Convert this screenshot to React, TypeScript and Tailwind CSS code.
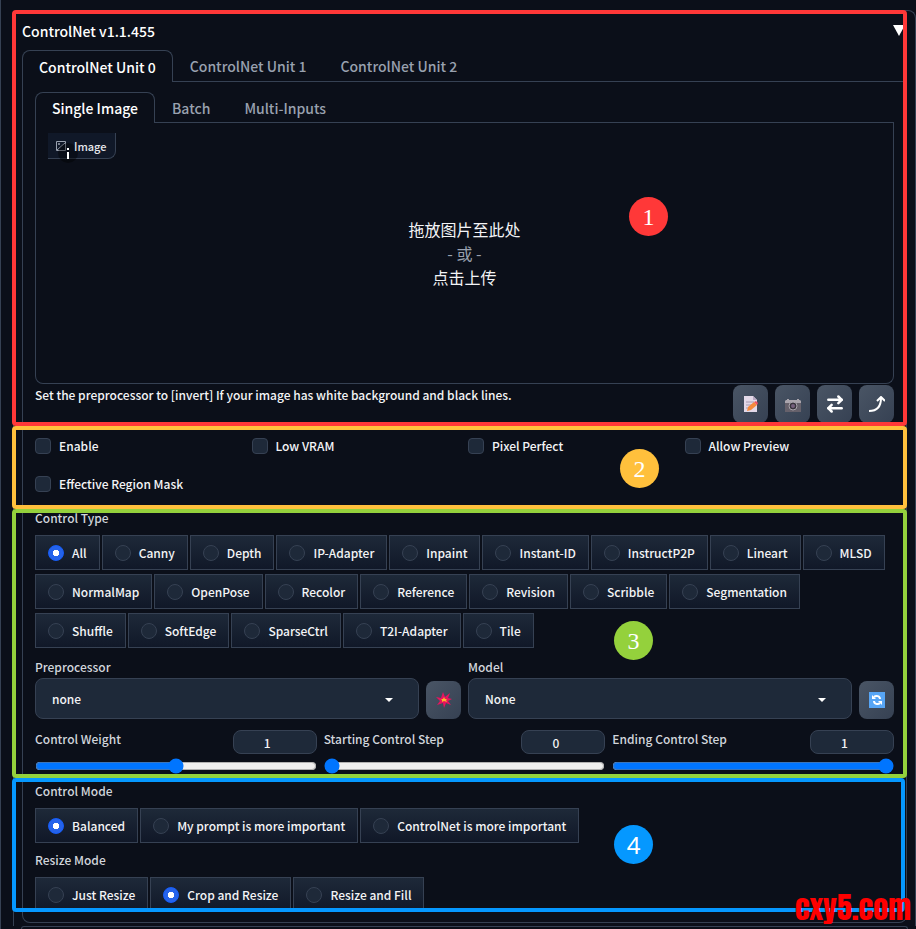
import React, { useState } from 'react';
import { ArrowRightLeft } from 'lucide-react';

const unitTabs = ['ControlNet Unit 0', 'ControlNet Unit 1', 'ControlNet Unit 2'];
const inputTabs = ['Single Image', 'Batch', 'Multi-Inputs'];
const options = ['Enable', 'Low VRAM', 'Pixel Perfect', 'Allow Preview', 'Effective Region Mask'];
const controlTypes = [
  'All', 'Canny', 'Depth', 'IP-Adapter', 'Inpaint', 'Instant-ID', 'InstructP2P', 'Lineart', 'MLSD',
  'NormalMap', 'OpenPose', 'Recolor', 'Reference', 'Revision', 'Scribble', 'Segmentation',
  'Shuffle', 'SoftEdge', 'SparseCtrl', 'T2I-Adapter', 'Tile',
];
const controlModes = ['Balanced', 'My prompt is more important', 'ControlNet is more important'];
const resizeModes = ['Just Resize', 'Crop and Resize', 'Resize and Fill'];

interface TabsProps {
  items: string[];
  active: string;
  onChange: (item: string) => void;
  className: string;
}

const Tabs: React.FC<TabsProps> = ({ items, active, onChange, className }) => (
  <div role="tablist" className="flex text-sm">
    {items.map((item) => (
      <button
        key={item}
        role="tab"
        aria-selected={item === active}
        onClick={() => onChange(item)}
        className={
          item === active
            ? `${className} rounded-t-lg border border-b-0 border-gray-700 px-4 text-white`
            : `${className} border-b border-gray-700 px-[17px] pt-px text-gray-400`
        }
      >
        {item}
      </button>
    ))}
    <div className="flex-1 border-b border-gray-700" />
  </div>
);

interface RadioGroupProps {
  label: string;
  name: string;
  items: string[];
  initial: string;
}

const RadioGroup: React.FC<RadioGroupProps> = ({ label, name, items, initial }) => {
  const [value, setValue] = useState(initial);

  return (
    <fieldset className="pr-1">
      <legend className="mb-2 leading-[18px] text-gray-300">{label}</legend>
      <div className="flex flex-wrap gap-x-[2px] gap-y-1">
        {items.map((item) => (
          <label
            key={item}
            className="flex h-[35px] items-center gap-2 border border-gray-700 bg-linear-to-b from-gray-800 to-gray-900 px-3"
          >
            <input
              type="radio"
              name={name}
              checked={value === item}
              onChange={() => setValue(item)}
              className="size-4 appearance-none rounded-full border border-gray-700 bg-gray-800 checked:border-blue-600 checked:bg-[radial-gradient(circle,white_3px,#2563eb_3px)]"
            />
            {item}
          </label>
        ))}
      </div>
    </fieldset>
  );
};

const ToolButton: React.FC<{ label: string; children: React.ReactNode }> = ({ label, children }) => (
  <button
    aria-label={label}
    className="flex h-[38px] w-[35px] items-center justify-center rounded-lg bg-linear-to-br from-gray-600 to-gray-700 text-white"
  >
    {children}
  </button>
);

interface DropdownProps {
  id: string;
  label: string;
  value: string;
  action: string;
  children: React.ReactNode;
}

const Dropdown: React.FC<DropdownProps> = ({ id, label, value, action, children }) => (
  <div className="flex items-end gap-[7px]">
    <div className="flex-1">
      <label htmlFor={id} className="mb-[2px] block leading-[18px] text-gray-300">{label}</label>
      <div className="relative">
        <select id={id} className="h-[41px] w-full appearance-none rounded-lg border border-gray-700 bg-gray-800 px-4 text-gray-100">
          <option>{value}</option>
        </select>
        <svg viewBox="0 0 8 4" className="pointer-events-none absolute top-5 right-[26px] h-1 w-2 fill-white">
          <path d="M0 0h8L4 4z" />
        </svg>
      </div>
    </div>
    <ToolButton label={action}>{children}</ToolButton>
  </div>
);

interface SliderProps {
  id: string;
  label: string;
  initial: number;
  max: number;
}

const Slider: React.FC<SliderProps> = ({ id, label, initial, max }) => {
  const [value, setValue] = useState(initial);

  return (
    <div>
      <div className="flex justify-between">
        <label htmlFor={id} className="leading-[18px] text-gray-300">{label}</label>
        <input
          type="number"
          aria-label={`${label} value`}
          value={value}
          max={max}
          onChange={(e) => setValue(Number(e.target.value))}
          className="h-6 w-[84px] rounded-lg border border-gray-700 bg-gray-800 px-2 text-center text-gray-100"
        />
      </div>
      <input
        id={id}
        type="range"
        min={0}
        max={max}
        step={0.01}
        value={value}
        onChange={(e) => setValue(Number(e.target.value))}
        className="mt-1 block h-4 w-full"
      />
    </div>
  );
};

const Badge: React.FC<{ className: string; children: React.ReactNode }> = ({ className, children }) => (
  <span className={`absolute flex size-[39px] items-center justify-center rounded-full text-2xl font-normal text-white ${className}`}>
    {children}
  </span>
);

export default function App() {
  const [unit, setUnit] = useState(unitTabs[0]);
  const [input, setInput] = useState(inputTabs[0]);

  return (
    <div className="flex min-h-screen flex-col overflow-hidden border-l border-gray-700 bg-[#0b0f19] pt-[10px] pl-3 font-['Noto_Sans_CJK_SC',sans-serif] text-xs/5 font-medium text-gray-100">
      <main className="relative rounded-t-lg border border-b-0 border-gray-700 px-2 pb-[3px]">
        <header className="flex h-[39px] items-center justify-between text-sm text-white">
          <h1>ControlNet v1.1.455</h1>
          <svg viewBox="0 0 12 11" className="mr-[2px] h-[11px] w-3 fill-white">
            <path d="M0 0h12L6 11z" />
          </svg>
        </header>

        <Tabs items={unitTabs} active={unit} onChange={setUnit} className="h-8" />

        <div className="rounded-b-lg border border-t-0 border-gray-700 px-3 pb-[10px]">
          {/* Image input */}
          <section className="relative h-[344px] pt-[10px]">
            <Tabs items={inputTabs} active={input} onChange={setInput} className="h-[31px]" />
            <div className="relative flex h-[261px] flex-col items-center justify-center rounded-b-lg border border-t-0 border-gray-700 text-base leading-6 font-normal">
              <div className="absolute top-[10px] left-3 flex h-[26px] items-center gap-2 rounded-br-lg border-r border-b border-gray-700 bg-gray-900 px-2 text-[11px] font-medium text-gray-200">
                <svg viewBox="0 0 10 10" className="size-[10px] fill-none stroke-gray-400">
                  <path d="M.5 .5h9v9h-9zM1 9l8-7" />
                  <circle cx="3" cy="3" r=".7" />
                </svg>
                <span className="absolute top-[10px] left-[10px] flex size-5 items-center justify-center rounded-full bg-black/40">
                  <svg viewBox="0 0 2 11" className="h-[11px] w-[2px] fill-white">
                    <path d="M0 0h2v2H0zM0 4h2v7H0z" />
                  </svg>
                </span>
                <span className="relative">Image</span>
              </div>
              <p>拖放图片至此处</p>
              <p className="text-gray-400">- 或 -</p>
              <p>点击上传</p>
            </div>
            <div className="flex justify-between pt-px">
              <p>Set the preprocessor to [invert] If your image has white background and black lines.</p>
              <div className="flex gap-[7px]">
                <ToolButton label="New canvas">
                  <svg viewBox="0 0 16 16" className="size-4">
                    <path d="M1 0h9l4 4v12H1z" fill="#e3d9e8" />
                    <path d="M10 0v4h4z" fill="#b9a9c4" />
                    <path d="M3 6h8M3 9h7M3 12h4" stroke="#a79ab0" />
                    <path d="M4 15l1-4 6-5 3 3-6 5z" fill="#f58a3c" />
                    <path d="M11 6l2-1 2 2-1 2z" fill="#f4505f" />
                  </svg>
                </ToolButton>
                <ToolButton label="Webcam">
                  <svg viewBox="0 0 16 16" className="size-4">
                    <path d="M0 5h16v11H0z" fill="#66616b" />
                    <path d="M0 5l1-1h1V3h2v1h8V3h2v1h1l1 1v2H0z" fill="#aaa5ad" />
                    <circle cx="8" cy="10" r="4" fill="#39343e" stroke="#aaa5ad" />
                    <circle cx="8" cy="10" r="2" fill="#76617e" />
                  </svg>
                </ToolButton>
                <ToolButton label="Mirror webcam">
                  <ArrowRightLeft className="size-5" strokeWidth={3} />
                </ToolButton>
                <ToolButton label="Send dimensions">
                  <svg viewBox="0 0 16 16" className="size-4 fill-none stroke-white stroke-2">
                    <path d="M0 15c7 0 12-3 12-13M8 5l4-4 4 4" />
                  </svg>
                </ToolButton>
              </div>
            </div>
            <div className="pointer-events-none absolute -top-[72px] right-[-13px] bottom-0 left-[-23px] rounded-sm border-4 border-[#ff3838]">
              <Badge className="top-[183px] left-[613px] bg-[#ff3838] font-['Liberation_Serif',serif]">1</Badge>
            </div>
          </section>

          {/* Unit options */}
          <section className="relative h-[83px] pt-[10px]">
            <div className="grid grid-cols-4 gap-x-[7px] gap-y-[18px]">
              {options.map((option) => (
                <label key={option} className="flex items-center gap-2">
                  <input
                    type="checkbox"
                    className="size-4 appearance-none rounded border border-gray-700 bg-gray-800 checked:border-blue-600 checked:bg-blue-600"
                  />
                  {option}
                </label>
              ))}
            </div>
            <div className="pointer-events-none absolute inset-y-0 right-[-13px] left-[-23px] rounded-sm border-4 border-[#ffc03c]">
              <Badge className="top-[19px] left-[604px] bg-[#ffc03c] font-['Liberation_Serif',serif]">2</Badge>
            </div>
          </section>

          {/* Control type, models and weights */}
          <section className="relative h-[269px]">
            <RadioGroup label="Control Type" name="control-type" items={controlTypes} initial="All" />
            <div className="mt-[10px] grid grid-cols-2 gap-[7px]">
              <Dropdown id="preprocessor" label="Preprocessor" value="none" action="Run preprocessor">
                <svg viewBox="0 0 16 16" className="size-4">
                  <path d="M7 0l2 5 5-4-2 5 4 1-4 2 3 4-5-2-2 5-1-5-6 2 3-4-4-4 5 1z" fill="#e8135f" />
                  <path d="M8 5l1 2 2 0-1 1 1 2-3-1-2 1 0-2-1-1 2 0z" fill="#fcb52c" />
                </svg>
              </Dropdown>
              <Dropdown id="model" label="Model" value="None" action="Refresh models">
                <svg viewBox="0 0 16 16" className="size-4">
                  <path d="M0 0h16v16H0z" fill="#57a5f5" />
                  <path d="M5 5c2-2 6-1 6 2M11 11c-2 2-6 1-6-2" fill="none" stroke="white" strokeWidth="2" />
                  <path d="M3 3v4h4zM13 13V9H9z" fill="white" />
                </svg>
              </Dropdown>
            </div>
            <div className="mt-[11px] grid grid-cols-3 gap-[7px]">
              <Slider id="weight" label="Control Weight" initial={1} max={2} />
              <Slider id="start" label="Starting Control Step" initial={0} max={1} />
              <Slider id="end" label="Ending Control Step" initial={1} max={1} />
            </div>
            <div className="pointer-events-none absolute inset-y-0 right-[-13px] left-[-23px] rounded-sm border-4 border-[#94d13c]">
              <Badge className="top-[108px] left-[598px] bg-[#94d13c] font-['Liberation_Serif',serif]">3</Badge>
            </div>
          </section>

          {/* Modes */}
          <section className="relative flex flex-col gap-2 pt-1">
            <RadioGroup label="Control Mode" name="control-mode" items={controlModes} initial="Balanced" />
            <RadioGroup label="Resize Mode" name="resize-mode" items={resizeModes} initial="Crop and Resize" />
            <div className="pointer-events-none absolute inset-y-0 right-[-11px] left-[-23px] rounded-sm border-4 border-[#0598ff]">
              <Badge className="top-[43px] left-[598px] bg-[#0598ff] font-['Noto_Sans',sans-serif]">4</Badge>
            </div>
          </section>
        </div>
        <span className="absolute right-1 bottom-0 font-[Anton,Impact,'Liberation_Sans_Narrow',sans-serif] text-3xl font-normal text-[#ff0000]">
          cxy5.com
        </span>
      </main>
      <div className="mx-2 min-h-[2px] flex-1 rounded-t-lg border border-b-0 border-gray-700" />
    </div>
  );
}
